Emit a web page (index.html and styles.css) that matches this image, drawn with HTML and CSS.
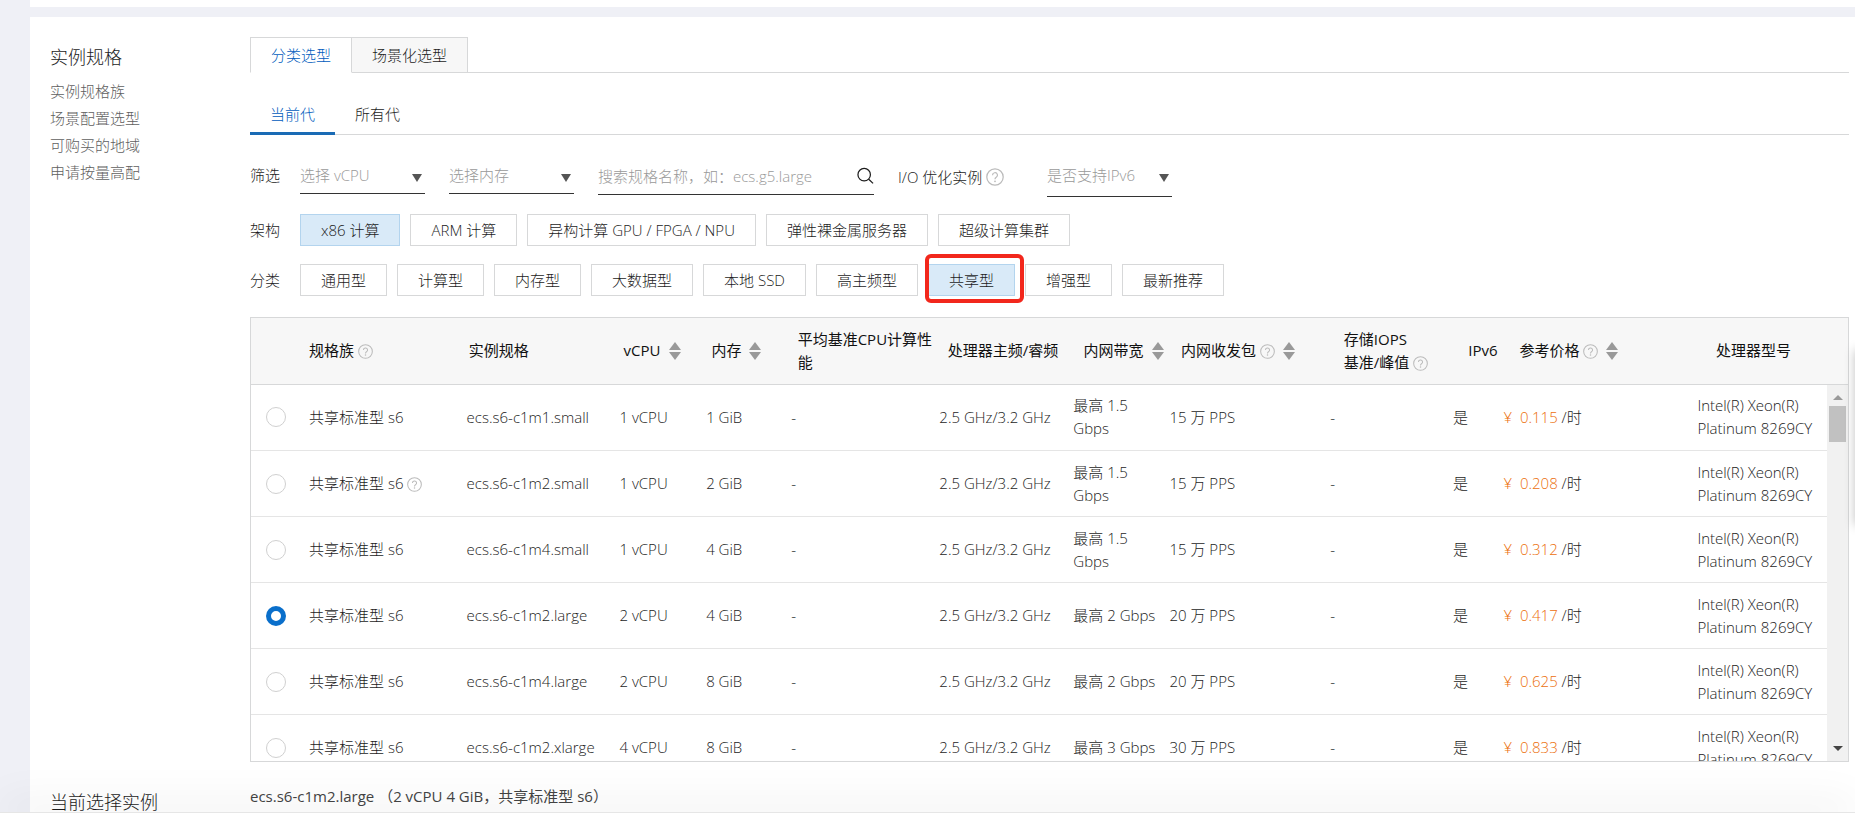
FILE: index.html
```html
<!DOCTYPE html>
<html lang="zh-CN">
<head>
<meta charset="utf-8">
<title>实例规格</title>
<link rel="stylesheet" href="styles.css">
</head>
<body>
<svg class="defs" aria-hidden="true">
  <symbol id="help" viewBox="0 0 16 16"><circle cx="8" cy="8" r="7.3" fill="none" stroke="currentColor" stroke-width="1.1"/><path d="M5.8 6.4a2.2 2.2 0 1 1 3.3 1.9c-.8.5-1.1.8-1.1 1.7" fill="none" stroke="currentColor" stroke-width="1.1"/><circle cx="8" cy="11.8" r=".8" fill="currentColor"/></symbol>
  <symbol id="sort" viewBox="0 0 12 18"><path d="M6 0l6 8H0zM6 18l6-8H0z" fill="currentColor"/></symbol>
  <symbol id="search" viewBox="0 0 18 18"><circle cx="7.6" cy="7.6" r="6.6" fill="none" stroke="currentColor" stroke-width="1.3"/><path d="M12.4 12.4l4.6 4.4" stroke="currentColor" stroke-width="1.3"/></symbol>
</svg>
<div class="page">
  <section class="prev-panel"></section>
  <section class="panel">
    <div class="field">
      <aside class="side">
        <h2>实例规格</h2>
        <a href="#">实例规格族</a>
        <a href="#">场景配置选型</a>
        <a href="#">可购买的地域</a>
        <a href="#">申请按量高配</a>
      </aside>
      <div class="main">
        <nav class="tabs">
          <button class="tab tab-on">分类选型</button>
          <button class="tab">场景化选型</button>
        </nav>
        <nav class="subtabs">
          <button class="subtab subtab-on">当前代</button>
          <button class="subtab">所有代</button>
        </nav>
        <div class="row filters">
          <span class="label">筛选</span>
          <span class="pick"><select aria-label="选择 vCPU"><option>选择 vCPU</option></select></span>
          <span class="pick"><select aria-label="选择内存"><option>选择内存</option></select></span>
          <label class="search"><input type="text" aria-label="搜索规格名称" placeholder="搜索规格名称，如：ecs.g5.large"><svg class="search-icon"><use href="#search"/></svg></label>
          <span class="io">I/O 优化实例<svg class="help help-lg"><use href="#help"/></svg></span>
          <span class="pick pick-tall"><select aria-label="是否支持IPv6"><option>是否支持IPv6</option></select></span>
        </div>
        <div class="row">
          <span class="label">架构</span>
          <button class="opt opt-on">x86 计算</button>
          <button class="opt">ARM 计算</button>
          <button class="opt">异构计算 GPU / FPGA / NPU</button>
          <button class="opt">弹性裸金属服务器</button>
          <button class="opt">超级计算集群</button>
        </div>
        <div class="row">
          <span class="label">分类</span>
          <button class="opt">通用型</button>
          <button class="opt">计算型</button>
          <button class="opt">内存型</button>
          <button class="opt">大数据型</button>
          <button class="opt">本地 SSD</button>
          <button class="opt">高主频型</button>
          <span class="marked"><button class="opt opt-on">共享型</button></span>
          <button class="opt">增强型</button>
          <button class="opt">最新推荐</button>
        </div>
        <div class="grid">
          <table class="specs specs-head">
            <colgroup><col class="c-radio"><col class="c-family"><col class="c-spec"><col class="c-cpu"><col class="c-mem"><col class="c-base"><col class="c-freq"><col class="c-band"><col class="c-pps"><col class="c-iops"><col class="c-v6"><col class="c-price"><col></colgroup>
            <thead><tr>
              <th></th>
              <th>规格族<svg class="help"><use href="#help"/></svg></th>
              <th>实例规格</th>
              <th>vCPU<svg class="sort"><use href="#sort"/></svg></th>
              <th>内存<svg class="sort"><use href="#sort"/></svg></th>
              <th>平均基准CPU计算性能</th>
              <th>处理器主频/睿频</th>
              <th>内网带宽<svg class="sort"><use href="#sort"/></svg></th>
              <th>内网收发包<svg class="help"><use href="#help"/></svg><svg class="sort"><use href="#sort"/></svg></th>
              <th>存储IOPS<br>基准/峰值<svg class="help"><use href="#help"/></svg></th>
              <th>IPv6</th>
              <th>参考价格<svg class="help"><use href="#help"/></svg><svg class="sort"><use href="#sort"/></svg></th>
              <th>处理器型号</th>
            </tr></thead>
          </table>
          <div class="scroll">
            <div class="view">
              <table class="specs">
                <colgroup><col class="c-radio"><col class="c-family"><col class="c-spec"><col class="c-cpu"><col class="c-mem"><col class="c-base"><col class="c-freq"><col class="c-band"><col class="c-pps"><col class="c-iops"><col class="c-v6"><col class="c-price"><col></colgroup>
                <tbody>
                  <tr><td><input type="radio" name="spec" aria-label="ecs.s6-c1m1.small"></td><td>共享标准型 s6</td><td>ecs.s6-c1m1.small</td><td>1 vCPU</td><td>1 GiB</td><td>-</td><td>2.5 GHz/3.2 GHz</td><td>最高 1.5 Gbps</td><td>15 万 PPS</td><td>-</td><td>是</td><td><span class="price">¥&nbsp; 0.115</span> /时</td><td>Intel(R) Xeon(R) Platinum 8269CY</td></tr>
                  <tr><td><input type="radio" name="spec" aria-label="ecs.s6-c1m2.small"></td><td>共享标准型 s6<svg class="help"><use href="#help"/></svg></td><td>ecs.s6-c1m2.small</td><td>1 vCPU</td><td>2 GiB</td><td>-</td><td>2.5 GHz/3.2 GHz</td><td>最高 1.5 Gbps</td><td>15 万 PPS</td><td>-</td><td>是</td><td><span class="price">¥&nbsp; 0.208</span> /时</td><td>Intel(R) Xeon(R) Platinum 8269CY</td></tr>
                  <tr><td><input type="radio" name="spec" aria-label="ecs.s6-c1m4.small"></td><td>共享标准型 s6</td><td>ecs.s6-c1m4.small</td><td>1 vCPU</td><td>4 GiB</td><td>-</td><td>2.5 GHz/3.2 GHz</td><td>最高 1.5 Gbps</td><td>15 万 PPS</td><td>-</td><td>是</td><td><span class="price">¥&nbsp; 0.312</span> /时</td><td>Intel(R) Xeon(R) Platinum 8269CY</td></tr>
                  <tr><td><input type="radio" name="spec" aria-label="ecs.s6-c1m2.large" checked></td><td>共享标准型 s6</td><td>ecs.s6-c1m2.large</td><td>2 vCPU</td><td>4 GiB</td><td>-</td><td>2.5 GHz/3.2 GHz</td><td>最高 2 Gbps</td><td>20 万 PPS</td><td>-</td><td>是</td><td><span class="price">¥&nbsp; 0.417</span> /时</td><td>Intel(R) Xeon(R) Platinum 8269CY</td></tr>
                  <tr><td><input type="radio" name="spec" aria-label="ecs.s6-c1m4.large"></td><td>共享标准型 s6</td><td>ecs.s6-c1m4.large</td><td>2 vCPU</td><td>8 GiB</td><td>-</td><td>2.5 GHz/3.2 GHz</td><td>最高 2 Gbps</td><td>20 万 PPS</td><td>-</td><td>是</td><td><span class="price">¥&nbsp; 0.625</span> /时</td><td>Intel(R) Xeon(R) Platinum 8269CY</td></tr>
                  <tr><td><input type="radio" name="spec" aria-label="ecs.s6-c1m2.xlarge"></td><td>共享标准型 s6</td><td>ecs.s6-c1m2.xlarge</td><td>4 vCPU</td><td>8 GiB</td><td>-</td><td>2.5 GHz/3.2 GHz</td><td>最高 3 Gbps</td><td>30 万 PPS</td><td>-</td><td>是</td><td><span class="price">¥&nbsp; 0.833</span> /时</td><td>Intel(R) Xeon(R) Platinum 8269CY</td></tr>
                </tbody>
              </table>
            </div>
            <div class="bar" aria-hidden="true"><span class="bar-up"></span><span class="bar-thumb"></span><span class="bar-down"></span></div>
          </div>
        </div>
      </div>
    </div>
    <div class="field current">
      <h2 class="side">当前选择实例</h2>
      <p class="main">ecs.s6-c1m2.large （2 vCPU 4 GiB，共享标准型 s6）</p>
    </div>
  </section>
</div>
<footer class="dock"></footer>
<div class="float-tools" aria-hidden="true"></div>
</body>
</html>
```

FILE: styles.css
```css
* { box-sizing: border-box; }
body {
  margin: 0;
  height: 100vh;
  display: flex;
  flex-direction: column;
  overflow: hidden;
  background: #eff0f6;
  color: #1c1c1c;
  font: 15px/23px "Open Sans", "Noto Sans CJK SC", sans-serif;
  font-weight: 300;
}
button, input, select { font: inherit; color: inherit; }
.defs { position: absolute; width: 0; height: 0; }
.page { flex: 1; min-height: 0; overflow: hidden; padding-left: 30px; }
.prev-panel { height: 7px; margin-bottom: 10px; background: #fff; }
.panel { background: #fff; padding: 20px 6px 20px 20px; }
.field { display: flex; }
.side { flex: none; width: 200px; display: flex; flex-direction: column; }
.main { flex: 1; min-width: 0; }
h2 { margin: 0; font-size: 18px; line-height: 28px; font-weight: 300; }
aside h2 { margin: 6px 0 7px; }
.side a { color: #606060; text-decoration: none; line-height: 27px; }

.tabs { display: flex; height: 36px; border-bottom: 1px solid #d7d8d9; }
.tab { height: 36px; padding: 0 20px; border: 1px solid #d7d8d9; border-left-width: 0; background: #f7f7f7; }
.tab-on { border-left-width: 1px; border-bottom-color: #fff; background: #fff; color: #005bbd; }
.subtabs { display: flex; margin-top: 24px; height: 38px; border-bottom: 1px solid #d7d8d9; }
.subtab { height: 38px; padding: 0 20px; border: 0; border-bottom: 3px solid transparent; background: none; }
.subtab-on { border-bottom-color: #1a6bb5; color: #005bbd; }

.row { display: flex; align-items: center; gap: 10px; margin-bottom: 18px; height: 32px; }
.label { width: 40px; }
.filters { height: 38px; margin: 22px 0 19px; gap: 24px; align-items: flex-start; line-height: 36px; }
.filters .label { width: 26px; white-space: nowrap; }
.pick { position: relative; width: 125px; height: 37px; border-bottom: 1px solid #333; }
.pick::after { content: ""; position: absolute; right: 3px; top: 17px; border: 5px solid transparent; border-top: 8px solid #555; border-bottom: 0; pointer-events: none; }
.pick select { appearance: none; width: 100%; height: 36px; padding: 0; border: 0; background: none; color: #999; }
.pick-tall { height: 40px; }
.search { display: flex; align-items: center; width: 276px; height: 38px; border-bottom: 1px solid #333; }
.search input { flex: 1; min-width: 0; height: 36px; padding: 0; border: 0; background: none; }
.search input::placeholder { color: #999; opacity: 1; }
.search-icon { width: 17px; height: 18px; }
.io { display: flex; align-items: center; gap: 4px; width: 125px; line-height: 40px; white-space: nowrap; }
.opt { height: 32px; padding: 0 20px; border: 1px solid #d7d8d9; background: #fff; white-space: nowrap; }
.opt-on { background: #d9eaf8; border-color: #b3d4ee; }
.marked { position: relative; }
.marked::after { content: ""; position: absolute; inset: -10px -9px -7px -3px; border: 4px solid #f2271c; border-radius: 6px; pointer-events: none; }

.grid { margin-top: 21px; border: 1px solid #d7d8d9; }
.specs { width: 100%; table-layout: fixed; border-collapse: collapse; }
.c-radio { width: 50px; }
.c-family { width: 10%; }
.c-spec { width: 9.7%; }
.c-cpu { width: 5.5%; }
.c-mem { width: 5.4%; }
.c-base { width: 9.4%; }
.c-freq { width: 8.5%; }
.c-band { width: 6.1%; }
.c-pps { width: 10.2%; }
.c-iops { width: 7.8%; }
.c-v6 { width: 3.2%; }
.c-price { width: 12.3%; }
th, td { height: 66px; padding: 0 4px 0 8px; border-bottom: 1px solid #e5e5e5; text-align: left; vertical-align: middle; }
th { padding-right: 0; background: #f7f7f7; border-color: #d7d8d9; color: #111; font-weight: 400; }
.help { width: 15px; height: 15px; margin-left: 4px; color: #bbb; vertical-align: -3px; }
.help-lg { width: 18px; height: 18px; margin: 0; }
.sort { width: 12px; height: 18px; margin-left: 8px; color: #999; vertical-align: -4px; }
.scroll { display: flex; height: 376px; }
.view { flex: 1; min-width: 0; overflow: hidden; }
td:first-child { padding: 0 0 0 15px; }
input[type="radio"] { appearance: none; display: block; width: 20px; height: 20px; margin: 0; border: 1px solid #d0d0d0; border-radius: 50%; background: #fff; }
input[type="radio"]:checked { border: 5px solid #0a6fcb; }
.price { color: #ec6f0c; }
.bar { flex: none; width: 21px; display: flex; flex-direction: column; align-items: center; background: #f1f1f1; padding: 10px 0; }
.bar-up, .bar-down { border: 5px solid transparent; }
.bar-up { border-bottom-color: #999; border-top: 0; }
.bar-down { border-top-color: #444; border-bottom: 0; margin-top: auto; }
.bar-thumb { width: 17px; height: 36px; margin-top: 6px; background: #c1c1c1; }

.current { padding-top: 23px; align-items: flex-start; }
.current h2 { margin-top: 3px; }
.current p { margin: 0; font-weight: 400; color: #444; }
.dock { position: relative; flex: none; height: 16px; background: #fff; border-top: 1px solid #e6e6e6; box-shadow: 0 -10px 40px rgba(0, 0, 0, 0.08); }
.float-tools { position: fixed; top: 350px; right: -40px; width: 40px; height: 175px; background: #fff; box-shadow: 0 0 10px rgba(0, 0, 0, 0.25); }
```
